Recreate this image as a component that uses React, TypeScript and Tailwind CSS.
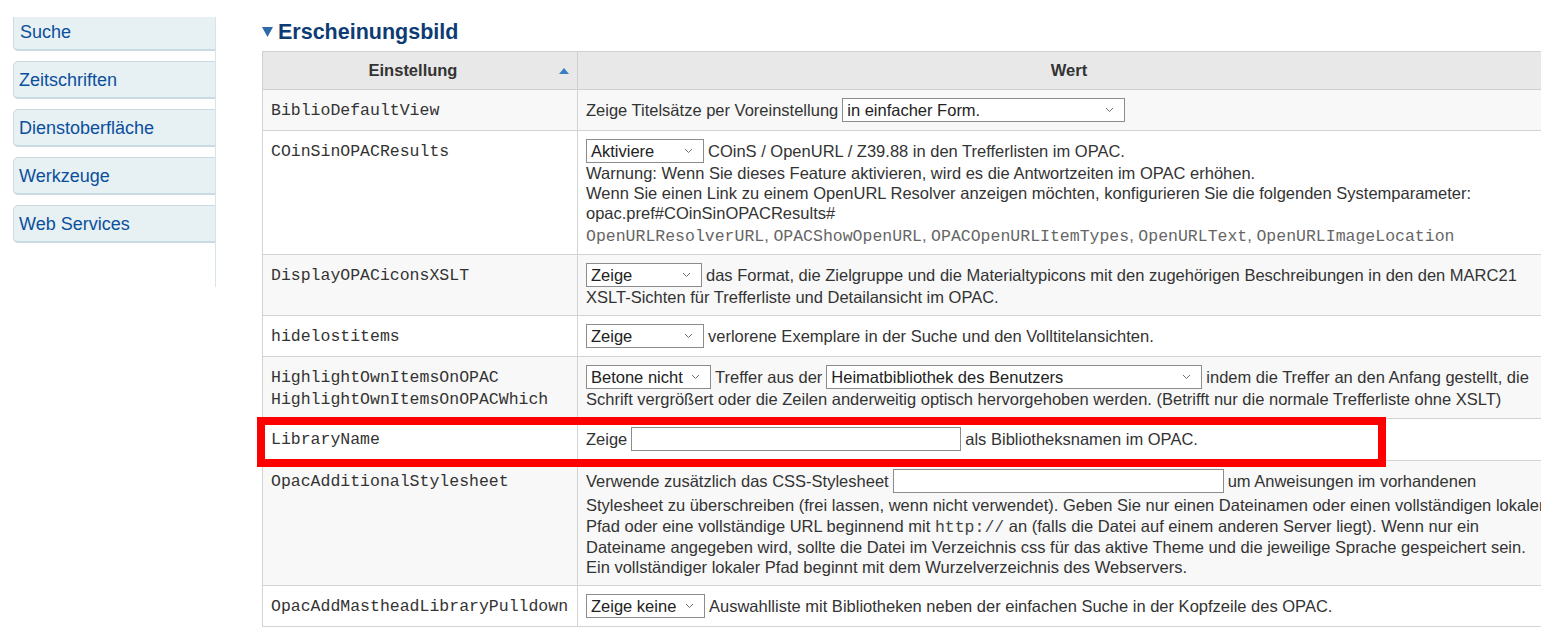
import React from "react";

const sans = "font-['Liberation_Sans',Arial,sans-serif]";
const mono = "font-['Liberation_Mono','Courier_New',monospace]";

function Chevron() {
    return (
        <svg width="9" height="6" viewBox="0 0 9 6" className="shrink-0">
            <polyline points="1,1 4.5,4.5 8,1" fill="none" stroke="#707070" strokeWidth="1" />
        </svg>
    );
}

function Dropdown({ label, width }: { label: string; width: string }) {
    return (
        <span className={`inline-flex h-[24px] shrink-0 items-center justify-between border border-[#8c8c8c] bg-white pl-[4px] pr-[10px] text-[#222] ${width}`}>
            <span>{label}</span>
            <Chevron />
        </span>
    );
}

function TextBox({ width }: { width: string }) {
    return <input type="text" className={`h-[24px] shrink-0 border border-[#8c8c8c] bg-white ${width}`} />;
}

function FirstLine({ children }: { children: React.ReactNode }) {
    return <div className="flex h-[24px] items-center gap-[4px] whitespace-nowrap">{children}</div>;
}

function Line({ children, h = "h-[21px] leading-[21px]" }: { children: React.ReactNode; h?: string }) {
    return <div className={`whitespace-nowrap ${h}`}>{children}</div>;
}

const menu = ["Zeitschriften", "Dienstoberfläche", "Werkzeuge", "Web Services"];

export default function App() {
    const keyCell = `border border-[#d3d3d3] px-[8px] pb-[6px] pt-[10px] align-top leading-[22px] text-[#333] ${mono}`;
    const valCell = "border border-[#d3d3d3] px-[8px] py-[8px] align-top text-[#333]";

    return (
        <div className={`flex h-[627px] w-[1541px] overflow-hidden bg-white text-[16.5px] ${sans}`}>
            {/* Seitenmenü */}
            <div className="ml-[13px] mt-[17px] h-[270px] w-[203px] shrink-0 border-r border-[#d5e5ea]">
                <div className="flex h-[34px] items-center rounded-bl-[5px] border-b-2 border-l border-[#c9dbe0] bg-[#e7f0f3] pb-[2px] pl-[6px] text-[18px] text-[#0b4f9c]">
                    Suche
                </div>
                {menu.map((m) => (
                    <div
                        key={m}
                        className="mt-[10px] flex h-[38px] items-center rounded-l-[5px] border border-b-2 border-r-0 border-[#c9dbe0] bg-[#e7f0f3] pl-[5px] pt-[1px] text-[18px] text-[#0b4f9c]"
                    >
                        {m}
                    </div>
                ))}
            </div>

            {/* Inhalt */}
            <div className="ml-[46px] shrink-0 pt-[18px]">
                <h1 className="mb-[5px] flex h-[28px] items-center text-[21.5px] font-bold text-[#0d3c74]">
                    <svg width="11" height="10" viewBox="0 0 11 10" className="mr-[5px]">
                        <polygon points="0,0 11,0 5.5,10" fill="#2f6aa8" />
                    </svg>
                    Erscheinungsbild
                </h1>

                <table className="w-[1299px] table-fixed border-collapse">
                    <colgroup>
                        <col className="w-[315px]" />
                        <col />
                    </colgroup>
                    <thead>
                        <tr className="bg-[#e8e8e8]">
                            <th className="border border-[#d0d0d0] px-[8px] py-[8px] leading-[21px] font-bold text-[#333]">
                                <div className="flex items-center">
                                    <span className="flex-1 text-center">Einstellung</span>
                                    <svg width="10" height="6" viewBox="0 0 10 6" className="ml-[4px]">
                                        <polygon points="0,6 5,0 10,6" fill="#3a7fc1" />
                                    </svg>
                                </div>
                            </th>
                            <th className="border border-[#d0d0d0] px-[8px] py-[8px] text-center leading-[21px] font-bold text-[#333]">
                                Wert
                            </th>
                        </tr>
                    </thead>
                    <tbody>
                        <tr className="bg-[#f8f8f8]">
                            <td className={keyCell}>BiblioDefaultView</td>
                            <td className={valCell}>
                                <FirstLine>
                                    Zeige Titelsätze per Voreinstellung
                                    <Dropdown label="in einfacher Form." width="w-[283px]" />
                                </FirstLine>
                            </td>
                        </tr>
                        <tr className="bg-white">
                            <td className={keyCell}>COinSinOPACResults</td>
                            <td className={valCell}>
                                <FirstLine>
                                    <Dropdown label="Aktiviere" width="w-[118px]" />
                                    COinS / OpenURL / Z39.88 in den Trefferlisten im OPAC.
                                </FirstLine>
                                <Line h="h-[20px] leading-[20px]">Warnung: Wenn Sie dieses Feature aktivieren, wird es die Antwortzeiten im OPAC erhöhen.</Line>
                                <Line h="h-[20px] leading-[20px]">
                                    Wenn Sie einen Link zu einem OpenURL Resolver anzeigen möchten, konfigurieren Sie die folgenden Systemparameter:
                                </Line>
                                <Line h="h-[20px] leading-[20px]">opac.pref#COinSinOPACResults#</Line>
                                <div className="h-[23px] whitespace-pre pt-[2px] leading-[20px] text-[#666]">
                                    <span className={mono}>OpenURLResolverURL</span>
                                    <span>, </span>
                                    <span className={mono}>OPACShowOpenURL</span>
                                    <span>, </span>
                                    <span className={mono}>OPACOpenURLItemTypes</span>
                                    <span>, </span>
                                    <span className={mono}>OpenURLText</span>
                                    <span>, </span>
                                    <span className={mono}>OpenURLImageLocation</span>
                                </div>
                            </td>
                        </tr>
                        <tr className="bg-[#f8f8f8]">
                            <td className={keyCell}>DisplayOPACiconsXSLT</td>
                            <td className={valCell}>
                                <FirstLine>
                                    <Dropdown label="Zeige" width="w-[116px]" />
                                    das Format, die Zielgruppe und die Materialtypicons mit den zugehörigen Beschreibungen in den den MARC21
                                </FirstLine>
                                <Line h="h-[20px] leading-[21px]">XSLT-Sichten für Trefferliste und Detailansicht im OPAC.</Line>
                            </td>
                        </tr>
                        <tr className="bg-white">
                            <td className={keyCell}>hidelostitems</td>
                            <td className={valCell}>
                                <FirstLine>
                                    <Dropdown label="Zeige" width="w-[118px]" />
                                    verlorene Exemplare in der Suche und den Volltitelansichten.
                                </FirstLine>
                            </td>
                        </tr>
                        <tr className="bg-[#f8f8f8]">
                            <td className={keyCell}>
                                HighlightOwnItemsOnOPAC
                                <br />
                                HighlightOwnItemsOnOPACWhich
                            </td>
                            <td className={valCell}>
                                <FirstLine>
                                    <Dropdown label="Betone nicht" width="w-[125px]" />
                                    Treffer aus der
                                    <Dropdown label="Heimatbibliothek des Benutzers" width="w-[376px]" />
                                    indem die Treffer an den Anfang gestellt, die
                                </FirstLine>
                                <Line>
                                    Schrift vergrößert oder die Zeilen anderweitig optisch hervorgehoben werden. (Betrifft nur die normale Trefferliste ohne XSLT)
                                </Line>
                            </td>
                        </tr>
                        <tr className="bg-white">
                            <td className={`${keyCell} relative`}>
                                LibraryName
                                {/* Markierung */}
                                <div className="pointer-events-none absolute left-[-6px] top-[-2px] h-[50px] w-[1129px] border-[8px] border-[#ff0000]" />
                            </td>
                            <td className="border border-[#d3d3d3] px-[8px] pb-[9px] pt-[8px] align-top text-[#333]">
                                <FirstLine>
                                    Zeige
                                    <TextBox width="w-[330px]" />
                                    als Bibliotheksnamen im OPAC.
                                </FirstLine>
                            </td>
                        </tr>
                        <tr className="bg-[#f8f8f8]">
                            <td className={keyCell}>OpacAdditionalStylesheet</td>
                            <td className={valCell}>
                                <div className="flex h-[26px] items-start gap-[4px] whitespace-nowrap leading-[24px]">
                                    Verwende zusätzlich das CSS-Stylesheet
                                    <TextBox width="w-[331px]" />
                                    um Anweisungen im vorhandenen
                                </div>
                                <Line h="h-[20px] leading-[20px]">
                                    Stylesheet zu überschreiben (frei lassen, wenn nicht verwendet). Geben Sie nur einen Dateinamen oder einen vollständigen lokalen
                                </Line>
                                <Line h="h-[22px] leading-[22px]">
                                    Pfad oder eine vollständige URL beginnend mit <span className={`${mono} text-[#444]`}>http://</span> an (falls die Datei auf einem anderen Server liegt). Wenn nur ein
                                </Line>
                                <Line h="h-[20px] leading-[20px]">
                                    Dateiname angegeben wird, sollte die Datei im Verzeichnis css für das aktive Theme und die jeweilige Sprache gespeichert sein.
                                </Line>
                                <Line h="h-[20px] leading-[20px]">Ein vollständiger lokaler Pfad beginnt mit dem Wurzelverzeichnis des Webservers.</Line>
                            </td>
                        </tr>
                        <tr className="bg-white">
                            <td className={keyCell}>OpacAddMastheadLibraryPulldown</td>
                            <td className={valCell}>
                                <FirstLine>
                                    <Dropdown label="Zeige keine" width="w-[119px]" />
                                    Auswahlliste mit Bibliotheken neben der einfachen Suche in der Kopfzeile des OPAC.
                                </FirstLine>
                            </td>
                        </tr>
                    </tbody>
                </table>
            </div>
        </div>
    );
}
